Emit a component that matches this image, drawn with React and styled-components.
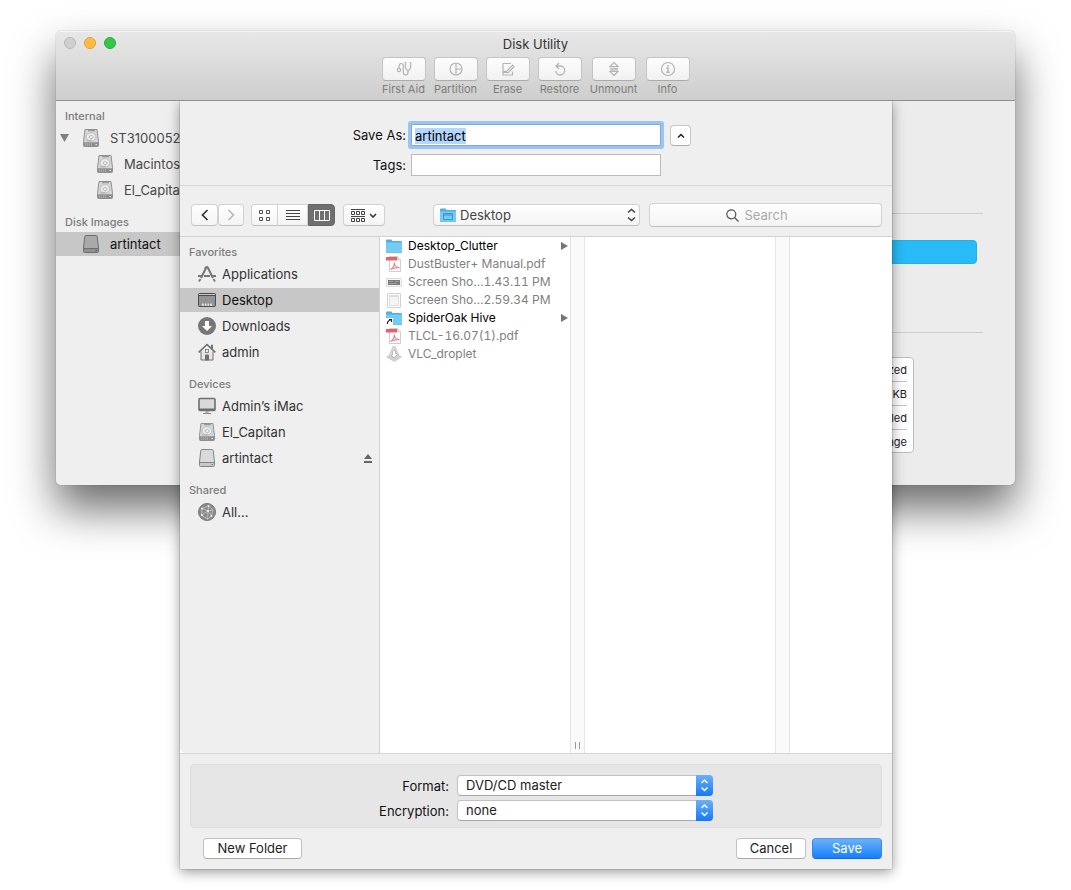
import React, { useEffect, useRef } from 'react';
import styled, { createGlobalStyle, css } from 'styled-components';

const GlobalStyle = createGlobalStyle`
  *, *::before, *::after { box-sizing: border-box; }
  body {
    margin: 0;
    background: #fff;
    color: #222;
    font: 13px/18px Inter, Roboto, "Liberation Sans", sans-serif;
  }
  button, input, select { font: inherit; color: inherit; margin: 0; outline: none; }
  ul { list-style: none; margin: 0; padding: 0; }
  svg { display: block; flex: none; }
`;

/* ---------- window chrome ---------- */

const Desktop = styled.main`
  min-height: 100vh;
  padding: 31px 56px 20px;
`;

const Window = styled.section`
  position: relative;
  border-radius: 5px;
  background: #ececec;
  box-shadow: 0 0 1px rgba(0, 0, 0, 0.5), 0 24px 44px rgba(0, 0, 0, 0.58);
`;

const TitleBar = styled.header`
  position: relative;
  height: 70px;
  padding-top: 4px;
  border-bottom: 1px solid #8f8f8f;
  border-radius: 5px 5px 0 0;
  background: linear-gradient(#e8e8e8, #cecece);
  box-shadow: inset 0 1px 0 #f4f4f4;
`;

const Lights = styled.div`
  position: absolute;
  top: 6px;
  left: 8px;
  display: flex;
  gap: 8px;
`;

const Light = styled.button`
  width: 12px;
  height: 12px;
  padding: 0;
  border: 1px solid ${(p) => p.$edge};
  border-radius: 50%;
  background: ${(p) => p.$fill};
`;

const Title = styled.h1`
  margin: 0;
  font-size: 13px;
  line-height: 18px;
  font-weight: 400;
  text-align: center;
  color: #333;
`;

const Tools = styled.div`
  display: flex;
  justify-content: center;
  gap: 8px;
  padding-top: 4px;
`;

const Tool = styled.div`
  display: flex;
  flex-direction: column;
  align-items: center;
  width: ${(p) => (p.$wide ? 48 : 44)}px;
`;

const ToolButton = styled.button`
  display: grid;
  place-items: center;
  width: 44px;
  height: 24px;
  padding: 0;
  border: 1px solid #c4c4c4;
  border-bottom-color: #ababab;
  border-radius: 4px;
  background: linear-gradient(#fdfdfd, #f1f1f1);
  color: #b4b4b4;
`;

const ToolLabel = styled.label`
  font-size: 11px;
  line-height: 17px;
  color: #7d7d7d;
  white-space: nowrap;
`;

const WindowBody = styled.div`
  display: flex;
`;

/* ---------- source lists ---------- */

const SourceList = styled.nav`
  width: ${(p) => p.$width}px;
  flex: none;
  display: flex;
  flex-direction: column;
  gap: 10px;
  padding-top: 5px;
  background: #efefef;
  border-radius: 0 0 0 5px;
  border-right: 1px solid #d2d2d2;
  overflow: hidden;
`;

const Heading = styled.h2`
  margin: 0;
  padding-left: 9px;
  font-size: 11px;
  line-height: 20px;
  font-weight: 500;
  color: #7c7c7c;
`;

const Items = styled.ul`
  display: flex;
  flex-direction: column;
  gap: 2px;
`;

const Item = styled.li`
  display: flex;
  align-items: center;
  gap: ${(p) => p.$gap || 6}px;
  height: 24px;
  padding-left: ${(p) => p.$indent || 18}px;
  padding-right: 7px;
  white-space: nowrap;
  color: ${(p) => (p.$selected ? '#111' : p.$soft ? '#484848' : '#333')};
  background: ${(p) => (p.$selected ? '#c7c7c7' : 'transparent')};
`;

const Grow = styled.span`
  flex: 1;
`;

const Twisty = styled.span`
  display: grid;
  width: 12px;
`;

/* ---------- volume details behind the sheet ---------- */

const Details = styled.div`
  flex: 1;
  display: flex;
  flex-direction: column;
  align-items: stretch;
  padding: 112px 32px 32px 20px;
`;

const Usage = styled.div`
  height: 120px;
  padding: 26px 6px 0 0;
  border-top: 1px solid #cdcdcd;
  border-bottom: 1px solid #cdcdcd;
`;

const UsageBar = styled.div`
  height: 24px;
  border: 1px solid #22b0ec;
  border-radius: 4px;
  background: #28bbf7;
`;

const Facts = styled.table`
  align-self: center;
  width: 70%;
  margin: 24px 69px 0 auto;
  border: 1px solid #bcbcbc;
  border-radius: 4px;
  border-spacing: 0;
  background: #fff;
  padding: 0 6px;

  td {
    height: 24px;
    padding: 2px 0 0;
    border-bottom: 1px solid #c4c4c4;
    font-size: 11px;
    line-height: 15px;
    text-align: right;
  }
  tr:last-child td { border-bottom: 0; height: 22px; }
`;

/* ---------- save sheet ---------- */

const Sheet = styled.form`
  position: absolute;
  top: 70px;
  left: 124px;
  right: 123px;
  background: #efefef;
  box-shadow: 0 0 1px rgba(0, 0, 0, 0.6), 0 3px 12px rgba(0, 0, 0, 0.4);
  clip-path: inset(0 -24px -30px -24px);
`;

const NameFields = styled.div`
  display: grid;
  grid-template-columns: 1fr 250px 1fr;
  row-gap: 8px;
  align-items: center;
  padding: 23px 0 9px;
  border-bottom: 1px solid #d6d6d6;
`;

const FieldLabel = styled.label`
  grid-column: 1;
  justify-self: end;
  padding-right: ${(p) => p.$space || 5}px;
  color: #111;
`;

const TextField = styled.input`
  width: 100%;
  height: 22px;
  padding: 1px 3px 0;
  border: 1px solid #bcbcbc;
  border-radius: 0;
  background: #fff;
  color: #000;
  line-height: 18px;

  &:focus {
    border-color: #7ea9dc;
    box-shadow: 0 0 0 3px #9ac4f2;
    border-radius: 1px;
  }
  &::selection { background: #b3d7fe; color: #000; }
`;

const controlFace = css`
  border: 1px solid #d2d2d2;
  border-bottom-color: #c0c0c0;
  border-radius: 4px;
  background: linear-gradient(#fff, #f4f4f4);
`;

const Expander = styled.button`
  display: grid;
  place-items: center;
  width: 21px;
  height: 21px;
  margin-left: 9px;
  padding: 0;
  border: 1px solid #c6c6c6;
  border-bottom-color: #acacac;
  border-radius: 4px;
  background: #fff;
`;

const Toolbar = styled.div`
  display: flex;
  align-items: center;
  height: 51px;
  padding: 8px 10px 0 11px;
  border-bottom: 1px solid #d2d2d2;
`;

const Segments = styled.div`
  display: flex;
  margin-right: ${(p) => p.$after}px;
`;

const Segment = styled.button`
  ${controlFace}
  display: flex;
  align-items: center;
  justify-content: center;
  gap: 4px;
  width: ${(p) => p.$width}px;
  height: 22px;
  padding: 0;
  color: ${(p) => (p.$on ? '#fff' : p.disabled ? '#b9b9b9' : '#333')};
  ${(p) => p.$on && css`
    background: #6f6f6f;
    border-color: #666;
  `}
  ${(p) => p.$join && css`
    &:not(:first-child) { border-top-left-radius: 0; border-bottom-left-radius: 0; border-left-width: ${p.$on ? 1 : 0}px; }
    &:not(:last-child) { border-top-right-radius: 0; border-bottom-right-radius: 0; }
  `}
`;

const Popup = styled.div`
  position: relative;
  flex: ${(p) => (p.$grow ? 1 : 'none')};

  svg { position: absolute; pointer-events: none; }
`;

const LocationSelect = styled.select`
  ${controlFace}
  appearance: none;
  display: block;
  width: 100%;
  height: 22px;
  padding: 0 20px 0 26px;
  color: #444;
`;

const LocationIcon = styled.span`
  svg { top: 4px; left: 7px; }
`;

const LocationArrows = styled.span`
  svg { top: 4px; right: 4px; }
`;

const SearchBox = styled.label`
  ${controlFace}
  display: flex;
  align-items: center;
  justify-content: center;
  gap: 6px;
  width: 233px;
  height: 24px;
  margin-left: 9px;
  color: #555;

  input {
    width: 61px;
    padding: 0;
    border: 0;
    background: none;
  }
  input::placeholder { color: #aaa; opacity: 1; }
`;

const Browser = styled.div`
  display: flex;
  height: 516px;
  background: #fff;
`;

const Column = styled.ul`
  flex: ${(p) => (p.$last ? '1' : '0 0 190px')};
`;

const Gutter = styled.div`
  display: flex;
  align-items: flex-end;
  justify-content: center;
  gap: 3px;
  width: 15px;
  flex: none;
  padding-bottom: 4px;
  border: solid #e4e4e4;
  border-width: 0 1px;
  background: #fafafa;

  i { width: 1px; height: 7px; background: #999; }
`;

const FileRow = styled.li`
  display: flex;
  align-items: center;
  gap: 6px;
  height: 18px;
  padding: 0 2px 0 6px;
  font-size: 12px;
  font-variant-numeric: tabular-nums;
  white-space: nowrap;
  color: ${(p) => (p.$dim ? '#808080' : '#000')};
`;

const Footer = styled.footer`
  padding: 10px;
  border-top: 1px solid #d6d6d6;
`;

const Options = styled.div`
  display: grid;
  grid-template-columns: 1fr 256px 168px;
  row-gap: 4px;
  align-items: center;
  padding: 10px 0 6px;
  border: 1px solid #dcdcdc;
  border-radius: 4px;
  background: #e6e6e6;
`;

const OptionPopup = styled(Popup)`
  grid-column: 2;

  svg { top: 0; right: 0; }
`;

const OptionSelect = styled.select`
  appearance: none;
  display: block;
  width: 100%;
  height: 21px;
  padding: 0 24px 1px 8px;
  border: 1px solid #c2c2c2;
  border-bottom-color: #a9a9a9;
  border-radius: 4px;
  background: #fff;
`;

const Actions = styled.div`
  display: flex;
  gap: 6px;
  padding: 10px 0 0 13px;
`;

const PushButton = styled.button`
  width: ${(p) => p.$width}px;
  height: 21px;
  padding: 0 0 1px;
  border: 1px solid #c2c2c2;
  border-bottom-color: #a9a9a9;
  border-radius: 4px;
  background: #fff;
  line-height: 18px;
  ${(p) => p.$primary && css`
    border-color: #4f9df0 #2f87f5 #1268ea;
    background: linear-gradient(#6bb1f8, #1780fb);
    color: #fff;
  `}
`;

/* ---------- icons ---------- */

const Svg = ({ w = 18, h = 18, children, ...rest }) => (
  <svg width={w} height={h} viewBox={`0 0 ${w} ${h}`} fill="none" aria-hidden="true" {...rest}>{children}</svg>
);

const HardDisk = () => (
  <Svg>
    <path d="M3 .5h12l1.500 12v4a1 1 0 0 1-1 1h-13a1 1 0 0 1-1-1v-4z" fill="#d6d6d6" stroke="#909090" />
    <path d="M1.500 13.200h15v3.300a1 1 0 0 1-1 1h-13a1 1 0 0 1-1-1z" fill="#8e8e8e" />
    <path d="M6 1.700h7" stroke="#8a8a8a" />
    <ellipse cx="9" cy="7.800" rx="4.800" ry="4.200" fill="#ececec" stroke="#b4b4b4" strokeWidth=".8" />
    <ellipse cx="9.200" cy="8" rx="2" ry="1.500" fill="#f4f4f4" stroke="#a8a8a8" strokeWidth=".8" />
    <path d="M4.200 11.800l3 .2 2.500-1.200" stroke="#a2a2a2" strokeWidth=".8" />
    <path d="M3.500 14v3M5.500 14v3M7.500 14v3M9.500 14v3" stroke="#b8b8b8" strokeWidth=".6" />
    <path d="M13.500 15.500h1.500" stroke="#e8e8e8" />
  </Svg>
);

const Drive = ({ dark }) => (
  <Svg>
    <path d="M4 .5h10q1 0 1.200 1l1.300 11.500v3.500a1 1 0 0 1-1 1h-13a1 1 0 0 1-1-1v-3.500L2.800 1.500Q3 .5 4 .5z" fill={dark ? '#a9a9a9' : '#dadada'} stroke={dark ? '#6e6e6e' : '#858585'} />
    <path d="M1.500 13.500h15" stroke={dark ? '#6e6e6e' : '#858585'} />
    <path d="M2 14h14v3H2z" fill={dark ? '#909090' : '#c8c8c8'} />
    <path d="M13.500 15.500h1.500" stroke={dark ? '#555' : '#777'} />
  </Svg>
);

const AppsIcon = () => (
  <Svg stroke="#767676">
    <path d="M8.500 2L3 13M9.500 2L15 13" strokeWidth="2" />
    <path d="M0 11h4M6 11h6M14 11h4" strokeWidth="2" />
    <path d="M9.500 1L6.500 3.500" strokeWidth="1.500" />
    <path d="M2.500 14L1 16.500M15.500 14l1.500 2.500" strokeWidth="1.800" />
  </Svg>
);

const DesktopIcon = () => (
  <Svg>
    <rect x=".5" y="2.500" width="17" height="13" rx="1" fill="#949494" stroke="#4c4c4c" />
    <path d="M1 4.500h16" stroke="#4c4c4c" />
    <path d="M1 3.500h16" stroke="#ddd" strokeWidth=".7" />
    <path d="M4 12.500h10V15H4z" fill="#ddd" />
    <path d="M6.500 12v3M9 12v3M11.500 12v3" stroke="#777" strokeWidth=".7" />
  </Svg>
);

const DownloadsIcon = () => (
  <Svg>
    <circle cx="9" cy="9" r="9" fill="#777" />
    <path d="M7 4h4v5h3l-5 5-5-5h3z" fill="#fff" />
  </Svg>
);

const HomeIcon = () => (
  <Svg stroke="#6f6f6f">
    <path d="M3 8.500v8.500h12V8.500" fill="#e6e6e6" />
    <path d="M.7 9.300L9 1.500l8.300 7.800" strokeWidth="1.600" />
    <path d="M13.500 5.500V2h1v4.500" />
    <rect x="7.500" y="6.500" width="3" height="3" strokeWidth=".8" />
    <path d="M7.500 12h3v5h-3z" fill="#6f6f6f" />
  </Svg>
);

const IMacIcon = () => (
  <Svg>
    <rect x="1" y="1.500" width="16" height="12" rx="1" fill="#d9d9d9" stroke="#6f6f6f" strokeWidth="1.600" />
    <path d="M1 12.500h16" stroke="#6f6f6f" strokeWidth="2" />
    <path d="M7.500 14h3v2h-3z" fill="#aaa" />
    <path d="M5 16.500h8" stroke="#8a8a8a" />
  </Svg>
);

const NetworkIcon = () => (
  <Svg>
    <circle cx="9" cy="9" r="8.500" fill="#8a8a8a" stroke="#777" />
    <g stroke="#dcdcdc" strokeWidth=".6">
      <path d="M10.500 3L4 5.500 3.500 12l6 4 4-3 1.500-6-4.500-4zM4 5.500L10 8l5-1M3.500 12L10 8l-.5 8M10 8l3.500 5M10.500 3L10 8" />
    </g>
    <g fill="#f2f2f2">
      <circle cx="10" cy="8" r="1.100" /><circle cx="4" cy="5.500" r=".9" /><circle cx="4" cy="12" r="1.100" />
      <circle cx="13.500" cy="13" r=".9" /><circle cx="10.500" cy="3" r=".9" />
    </g>
  </Svg>
);

const EjectIcon = () => (
  <Svg w={8} h={9}><path d="M4 0l4 5H0zM0 7h8v2H0z" fill="#666" /></Svg>
);

const Folder = ({ glyph, alias }) => (
  <Svg w={16} h={14}>
    <path d="M0 1.500a1 1 0 0 1 1-1h4.500l1 1.500H15a1 1 0 0 1 1 1V13a1 1 0 0 1-1 1H1a1 1 0 0 1-1-1z" fill="#4fb0dd" />
    <path d="M0 3.500h16V13a.7.7 0 0 1-.7.7H.7A.7.7 0 0 1 0 13z" fill="#74cbf3" />
    {glyph && <path d="M3.500 5.500h9v6h-9zM3.500 7h9" stroke="#3c97c8" />}
    {alias && <><rect x="0" y="7" width="7" height="7" fill="#fff" /><path d="M1.500 13q-.5-3 3-4M3 8.500h2.500V11" stroke="#222" strokeWidth="1.200" /></>}
  </Svg>
);

const Pdf = () => (
  <Svg w={16} h={16}>
    <path d="M3.500.5h8l3 3v12h-11z" fill="#fff" stroke="#cfcfcf" />
    <path d="M11.500.5v3h3" stroke="#cfcfcf" fill="#eee" />
    <path d="M0 1h11v3.500H0z" fill="#e0646a" />
    <path d="M4.500 13.500c2.500-1 4-4.500 3.800-7 .3 3 2.400 5 5.400 5.300-3-.5-6.500.2-9.200 1.700z" stroke="#e58a8e" strokeWidth="1.100" />
  </Svg>
);

const WideShot = () => (
  <Svg w={16} h={16}>
    <path d="M.5 4.500h15v8H.5z" fill="#f6f6f6" stroke="#ddd" />
    <path d="M2 6h12v5H2z" fill="#7c7c7c" />
    <path d="M3 7.500h4M9 7.500h4M3 9.500h8" stroke="#a5a5a5" strokeWidth=".8" />
  </Svg>
);

const TallShot = () => (
  <Svg w={16} h={16}>
    <path d="M1.500 1.500h13v14h-13z" fill="#fff" stroke="#d2d2d2" />
    <path d="M3.500 3.500h9v10h-9z" fill="#f5f5f5" stroke="#dedede" />
    <path d="M4 4.500h8" stroke="#ddd" />
  </Svg>
);

const Droplet = () => (
  <Svg w={16} h={16}>
    <path d="M.5 11l6-3h4l5 3-7 4.500z" fill="#d4d4d4" stroke="#bcbcbc" strokeWidth=".6" />
    <path d="M7 .5h2L13 9l-4.500 4L3 9.500z" fill="#d9d9d9" stroke="#bdbdbd" strokeWidth=".6" />
    <path d="M6.500 5l3-1v3.500l2 1L8 11.500 5 9.500l1.500-.5z" fill="#fff" stroke="#9a9a9a" strokeWidth=".6" />
  </Svg>
);

const RowArrow = () => (
  <Svg w={7} h={8}><path d="M0 0l7 4-7 4z" fill="#757575" /></Svg>
);

const Stethoscope = () => (
  <Svg w={16} h={16} stroke="currentColor" strokeWidth="1.200">
    <circle cx="3" cy="9" r="1.700" />
    <path d="M3 7.300C3 4 4 2.500 5.300 2.500S7.300 4 7.300 6v5c0 2 1 3 2.200 3s2.500-1 2.500-3V9.500" />
    <path d="M10.500 1.500H9.300v4q.3 3.500 2.700 4 2.400-.5 2.700-4v-4h-1.200" />
  </Svg>
);
const PartitionIcon = () => (
  <Svg w={16} h={16} stroke="currentColor" strokeWidth="1.200"><circle cx="8" cy="8" r="6" /><path d="M8 2v12M8 8h6" /></Svg>
);
const EraseIcon = () => (
  <Svg w={16} h={16} stroke="currentColor" strokeWidth="1.200">
    <path d="M11 2.500H3v7.500M3 11.500v2.500h9.500v-3.500" />
    <path d="M3 10.500h3.500l6-6.500 1.500 1.500-5.500 6H3z" />
  </Svg>
);
const RestoreIcon = () => (
  <Svg w={16} h={16} stroke="currentColor" strokeWidth="1.300"><path d="M4 5h4.500a4.500 4.500 0 1 1-4.800 5M7 2L4 5l3 3" /></Svg>
);
const UnmountIcon = () => (
  <Svg w={16} h={16} stroke="currentColor" strokeWidth="1.100"><path d="M8 1.500l4 4H4zM8 14.500l4-4H4zM4 7.300h8M4 8.900h8" /></Svg>
);
const InfoIcon = () => (
  <Svg w={16} h={16} stroke="currentColor" strokeWidth="1.200"><circle cx="8" cy="8" r="6.500" /><path d="M6.500 7H8v4M6.300 11.300h3.400M7.300 4.700h1.400" strokeWidth="1.400" /></Svg>
);

const Chevron = ({ d, w = 8, h = 12, bold = 1.700 }) => (
  <Svg w={w} h={h} stroke="currentColor" strokeWidth={bold}><path d={d} /></Svg>
);

const GridIcon = () => (
  <Svg w={11} h={11} stroke="#555"><path d="M.5.5h3v3h-3zM7.500.5h3v3h-3zM.5 7.500h3v3h-3zM7.500 7.500h3v3h-3z" /></Svg>
);
const ListIcon = () => (
  <Svg w={14} h={11} stroke="#444"><path d="M0 .5h14M0 3.500h14M0 6.500h14M0 9.500h14" /></Svg>
);
const ColumnsIcon = () => (
  <Svg w={16} h={11} stroke="#fff"><path d="M.5.5h15v10H.5zM5.500.5v10M10.500.5v10" /></Svg>
);
const ArrangeIcon = () => (
  <Svg w={14} h={13} stroke="#444">
    <path d="M0 .5h14M.5 2.500h3v3h-3zM5.500 2.500h3v3h-3zM10.500 2.500h3v3h-3zM0 7.500h14M.5 9.500h3v3h-3zM5.500 9.500h3v3h-3zM10.500 9.500h3v3h-3z" />
  </Svg>
);
const UpDown = () => (
  <Svg w={9} h={14} stroke="#444" strokeWidth="1.500"><path d="M1 4.500l3.500-3 3.500 3M1 9.500l3.500 3 3.500-3" /></Svg>
);
const BlueArrows = () => (
  <Svg w={17} h={21}>
    <defs><linearGradient id="cap" x2="0" y2="1"><stop stopColor="#6bb1f8" /><stop offset="1" stopColor="#1578f8" /></linearGradient></defs>
    <path d="M0 0h13a4 4 0 0 1 4 4v13a4 4 0 0 1-4 4H0z" fill="url(#cap)" />
    <path d="M5.500 8l3-3 3 3M5.500 12.500l3 3 3-3" stroke="#fff" strokeWidth="1.500" />
  </Svg>
);
const SearchIcon = () => (
  <Svg w={13} h={13} stroke="#555" strokeWidth="1.200"><circle cx="5.300" cy="5.300" r="4.500" /><path d="M8.500 8.500l4 4" /></Svg>
);

/* ---------- data ---------- */

const tools = [
  ['First Aid', Stethoscope],
  ['Partition', PartitionIcon],
  ['Erase', EraseIcon],
  ['Restore', RestoreIcon],
  ['Unmount', UnmountIcon],
  ['Info', InfoIcon],
];

const places = [
  ['Favorites', [['Applications', AppsIcon], ['Desktop', DesktopIcon], ['Downloads', DownloadsIcon], ['admin', HomeIcon]]],
  ['Devices', [['Admin’s iMac', IMacIcon], ['El_Capitan', HardDisk], ['artintact', Drive, true]]],
  ['Shared', [['All…', NetworkIcon]]],
];

const files = [
  ['Desktop_Clutter', <Folder />, 'folder'],
  ['DustBuster+ Manual.pdf', <Pdf />],
  ['Screen Sho…1.43.11 PM', <WideShot />],
  ['Screen Sho…2.59.34 PM', <TallShot />],
  ['SpiderOak Hive', <Folder alias />, 'folder'],
  ['TLCL-16.07(1).pdf', <Pdf />],
  ['VLC_droplet', <Droplet />],
];

export default function App() {
  const nameRef = useRef(null);

  useEffect(() => {
    nameRef.current.focus();
    nameRef.current.select();
  }, []);

  return (
    <>
      <GlobalStyle />
      <Desktop>
        <Window>
          <TitleBar>
            <Lights>
              <Light type="button" aria-label="Close" $fill="#cfcfcf" $edge="#b9b9b9" />
              <Light type="button" aria-label="Minimize" $fill="#fdbc40" $edge="#e0a03a" />
              <Light type="button" aria-label="Zoom" $fill="#33c748" $edge="#29ab3a" />
            </Lights>
            <Title>Disk Utility</Title>
            <Tools>
              {tools.map(([name, Icon]) => (
                <Tool key={name} $wide={name === 'Unmount'}>
                  <ToolButton type="button" id={`tool-${name}`} disabled><Icon /></ToolButton>
                  <ToolLabel htmlFor={`tool-${name}`}>{name}</ToolLabel>
                </Tool>
              ))}
            </Tools>
          </TitleBar>

          <WindowBody>
            <SourceList $width={200} aria-label="Volumes">
              <div>
                <Heading>Internal</Heading>
                <Items>
                  <Item $indent={4} $gap={10} $soft>
                    <Twisty><Svg w={9} h={8}><path d="M0 0h9L4.500 8z" fill="#808080" /></Svg></Twisty>
                    <HardDisk />ST3100052
                  </Item>
                  <Item $indent={40} $gap={10} $soft><HardDisk />Macintos</Item>
                  <Item $indent={40} $gap={10} $soft><HardDisk />El_Capita</Item>
                </Items>
              </div>
              <div>
                <Heading>Disk Images</Heading>
                <Items>
                  <Item $indent={26} $gap={10} $selected><Drive dark />artintact</Item>
                </Items>
              </div>
            </SourceList>
            <Details>
              <Usage><UsageBar /></Usage>
              <Facts>
                <tbody>
                  {['zed', 'KB', 'led', 'age'].map((t) => <tr key={t}><td>{t}</td></tr>)}
                </tbody>
              </Facts>
            </Details>
          </WindowBody>

          <Sheet onSubmit={(e) => e.preventDefault()}>
            <NameFields>
              <FieldLabel htmlFor="name">Save As:</FieldLabel>
              <TextField id="name" ref={nameRef} defaultValue="artintact" autoComplete="off" spellCheck={false} />
              <Expander type="button" aria-label="Collapse"><Chevron w={8} h={5} d="M1 4.500l3-3 3 3" bold={1.500} /></Expander>
              <FieldLabel htmlFor="tags">Tags:</FieldLabel>
              <TextField id="tags" />
            </NameFields>

            <Toolbar>
              <Segments $after={7}>
                <Segment type="button" $width={27} aria-label="Back"><Chevron d="M6.500 1l-5 5 5 5" /></Segment>
                <Segment type="button" $width={26} aria-label="Forward" disabled><Chevron d="M1.500 1l5 5-5 5" /></Segment>
              </Segments>
              <Segments $after={8}>
                <Segment type="button" $join $width={27} aria-label="Icons"><GridIcon /></Segment>
                <Segment type="button" $join $width={30} aria-label="List"><ListIcon /></Segment>
                <Segment type="button" $join $on $width={27} aria-label="Columns"><ColumnsIcon /></Segment>
              </Segments>
              <Segments $after={48}>
                <Segment type="button" $width={42} aria-label="Arrange">
                  <ArrangeIcon />
                  <Chevron w={8} h={5} d="M1 1l3 3 3-3" bold={1.500} />
                </Segment>
              </Segments>
              <Popup $grow>
                <LocationSelect aria-label="Location"><option>Desktop</option></LocationSelect>
                <LocationIcon><Folder glyph /></LocationIcon>
                <LocationArrows><UpDown /></LocationArrows>
              </Popup>
              <SearchBox>
                <SearchIcon />
                <input type="text" placeholder="Search" aria-label="Search" />
              </SearchBox>
            </Toolbar>

            <Browser>
              <SourceList $width={200} aria-label="Places">
                {places.map(([heading, items]) => (
                  <div key={heading}>
                    <Heading>{heading}</Heading>
                    <Items>
                      {items.map(([name, Icon, eject]) => (
                        <Item key={name} $selected={name === 'Desktop'}>
                          <Icon />{name}
                          {eject && <><Grow /><EjectIcon /></>}
                        </Item>
                      ))}
                    </Items>
                  </div>
                ))}
              </SourceList>
              <Column>
                {files.map(([name, icon, kind]) => (
                  <FileRow key={name} $dim={!kind}>
                    {icon}{name}
                    {kind && <><Grow /><RowArrow /></>}
                  </FileRow>
                ))}
              </Column>
              <Gutter><i /><i /></Gutter>
              <Column />
              <Gutter />
              <Column $last />
            </Browser>

            <Footer>
              <Options>
                <FieldLabel $space={8} htmlFor="format">Format:</FieldLabel>
                <OptionPopup>
                  <OptionSelect id="format"><option>DVD/CD master</option></OptionSelect>
                  <BlueArrows />
                </OptionPopup>
                <FieldLabel $space={8} htmlFor="encryption">Encryption:</FieldLabel>
                <OptionPopup>
                  <OptionSelect id="encryption"><option>none</option></OptionSelect>
                  <BlueArrows />
                </OptionPopup>
              </Options>
              <Actions>
                <PushButton type="button" $width={99}>New Folder</PushButton>
                <Grow />
                <PushButton type="button" $width={70}>Cancel</PushButton>
                <PushButton type="submit" $width={70} $primary>Save</PushButton>
              </Actions>
            </Footer>
          </Sheet>
        </Window>
      </Desktop>
    </>
  );
}
